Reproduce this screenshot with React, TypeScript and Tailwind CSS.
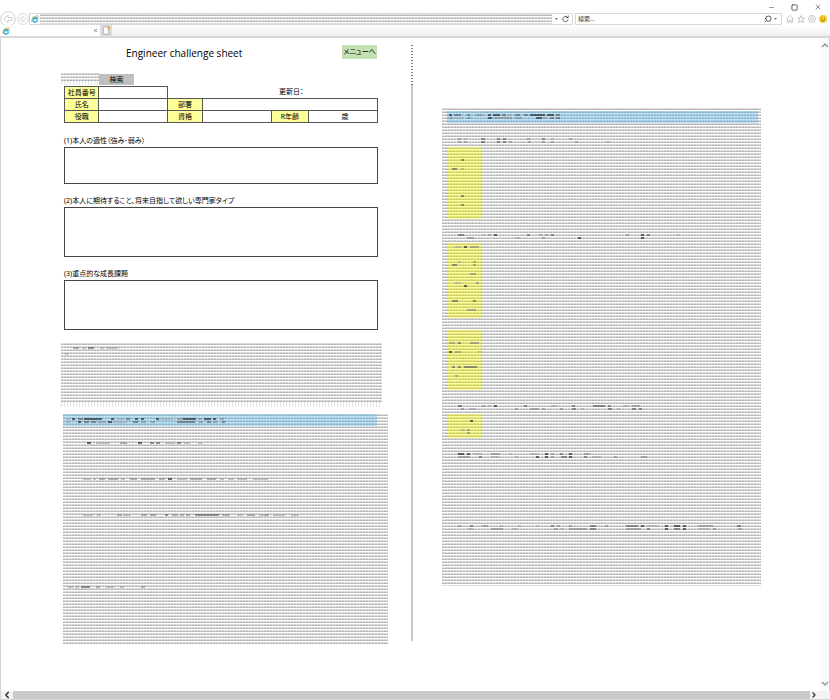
import type { ReactNode } from 'react';
import { ChevronLeft, ChevronRight, Minus, Search, Square, X } from 'lucide-react';

type Mark = [x: number, y: number, width: number, shade?: number];

const noteMarks: Mark[] = [
  [12, 4, 6, 2], [21, 4, 4, 1], [27, 4, 6, 3], [39, 4, 4, 1], [45, 4, 12, 1], [4, 10, 3, 1],
];

const leftHeadMarks: Mark[] = [
  [3, 4, 4, 1], [9, 4, 3, 4], [15, 4, 5, 3], [21, 4, 18, 4], [48, 4, 3, 4], [54, 4, 7, 1],
  [63, 4, 4, 3], [72, 4, 3, 4], [78, 4, 3, 4], [93, 4, 3, 4], [98, 4, 12, 1], [114, 4, 6, 2],
  [120, 4, 13, 4], [135, 4, 4, 2], [141, 4, 7, 4], [150, 4, 3, 4], [157, 4, 4, 2],
  [3, 7, 4, 1], [15, 7, 3, 4], [21, 7, 5, 3], [28, 7, 5, 3], [35, 7, 8, 2], [45, 7, 4, 4],
  [50, 7, 14, 1], [70, 7, 5, 3], [78, 7, 5, 2], [88, 7, 4, 2], [114, 7, 18, 3], [136, 7, 4, 2],
  [144, 7, 4, 3], [150, 7, 4, 2], [159, 7, 3, 3],
];

const leftBodyMarks: Mark[] = [
  [24, 28, 4, 4], [33, 28, 14, 1], [57, 28, 7, 2], [75, 28, 4, 4], [87, 28, 4, 3], [93, 28, 4, 3],
  [102, 28, 10, 1], [114, 28, 4, 3], [121, 28, 6, 1], [135, 28, 4, 1],
  [20, 64, 8, 1], [30, 64, 3, 1], [36, 64, 6, 2], [45, 64, 10, 2], [58, 64, 4, 1], [67, 64, 7, 2],
  [78, 64, 14, 2], [96, 64, 6, 2], [105, 64, 4, 4], [114, 64, 10, 1], [127, 64, 12, 2], [144, 64, 9, 2],
  [157, 64, 4, 1], [165, 64, 6, 1], [174, 64, 10, 1], [190, 64, 15, 1],
  [20, 100, 10, 1], [34, 100, 4, 1], [54, 100, 5, 2], [60, 100, 8, 1], [78, 100, 6, 2],
  [87, 100, 6, 2], [102, 100, 3, 3], [109, 100, 6, 2], [117, 100, 4, 2], [123, 100, 4, 2],
  [132, 100, 24, 3], [159, 100, 8, 2], [174, 100, 6, 1], [184, 100, 8, 2], [196, 100, 8, 1],
  [202, 100, 4, 2], [210, 100, 8, 1], [218, 100, 4, 1], [228, 100, 8, 1],
  [5, 172, 5, 1], [12, 172, 4, 1], [18, 172, 9, 3], [33, 172, 4, 2], [43, 172, 8, 1], [57, 172, 4, 1], [78, 172, 4, 2],
];

const rightMarks: Mark[] = [
  [7, 6, 3, 4], [12, 6, 7, 3], [25, 6, 3, 3], [34, 6, 7, 2], [46, 6, 3, 4], [51, 6, 7, 4], [60, 6, 4, 3],
  [66, 6, 4, 1], [73, 6, 5, 3], [82, 6, 4, 3], [88, 6, 15, 4], [105, 6, 7, 4], [114, 6, 4, 3],
  [7, 9, 4, 2], [13, 9, 8, 1], [25, 9, 4, 2], [46, 9, 4, 4], [52, 9, 18, 2], [73, 9, 7, 2],
  [94, 9, 6, 4], [101, 9, 4, 2], [108, 9, 4, 3], [114, 9, 4, 3],
  [16, 30, 3, 2], [22, 30, 3, 1], [39, 30, 4, 3], [55, 30, 3, 3], [61, 30, 3, 3], [85, 30, 3, 2],
  [100, 30, 3, 3], [109, 30, 3, 1], [127, 30, 3, 2], [16, 33, 3, 2], [22, 33, 3, 2], [39, 33, 4, 3],
  [55, 33, 3, 3], [61, 33, 3, 3], [67, 33, 3, 2], [86, 33, 3, 2], [100, 33, 3, 2], [109, 33, 3, 2], [133, 33, 3, 2], [164, 33, 4, 1],
  [19, 51, 3, 3], [10, 60, 5, 3], [19, 60, 3, 1], [19, 87, 3, 3], [19, 96, 3, 3],
  [16, 126, 6, 3], [40, 126, 3, 1], [46, 126, 3, 2], [52, 126, 3, 4], [85, 126, 3, 3], [97, 126, 3, 2],
  [103, 126, 3, 2], [109, 126, 3, 3], [184, 126, 3, 2], [199, 126, 3, 4], [205, 126, 3, 3], [235, 126, 3, 1],
  [25, 129, 7, 2], [73, 129, 5, 1], [100, 129, 3, 2], [136, 129, 3, 4], [199, 129, 3, 4],
  [13, 138, 6, 1], [22, 138, 3, 4], [28, 138, 9, 2], [16, 153, 3, 1], [31, 153, 3, 2],
  [10, 156, 5, 3], [31, 156, 3, 2], [28, 165, 6, 2], [13, 174, 6, 1], [34, 174, 3, 2],
  [22, 177, 3, 4], [10, 192, 6, 3], [31, 192, 3, 3], [25, 201, 9, 2],
  [7, 234, 6, 2], [16, 234, 3, 3], [28, 234, 9, 2], [7, 243, 3, 4], [13, 243, 6, 2], [36, 243, 3, 1],
  [10, 258, 3, 3], [16, 258, 3, 3], [22, 258, 13, 3], [13, 267, 3, 2],
  [16, 297, 4, 3], [40, 297, 3, 2], [46, 297, 3, 1], [52, 297, 3, 4], [82, 297, 3, 3], [109, 297, 6, 1],
  [130, 297, 3, 3], [151, 297, 12, 3], [166, 297, 3, 3], [181, 297, 6, 1], [190, 297, 8, 2],
  [19, 300, 3, 2], [27, 300, 7, 1], [73, 300, 3, 2], [88, 300, 9, 2], [100, 300, 3, 2],
  [118, 300, 3, 2], [130, 300, 4, 3], [139, 300, 3, 1], [166, 300, 4, 3], [175, 300, 3, 1], [190, 300, 4, 3], [197, 300, 3, 3],
  [28, 312, 3, 4], [19, 321, 4, 1], [25, 321, 3, 2], [25, 324, 3, 2],
  [16, 345, 6, 4], [25, 345, 3, 4], [31, 345, 9, 1], [49, 345, 9, 2], [67, 345, 3, 1], [88, 345, 9, 1],
  [103, 345, 3, 4], [109, 345, 3, 2], [118, 345, 3, 3], [127, 345, 3, 4], [142, 345, 6, 2],
  [16, 348, 12, 2], [37, 348, 3, 3], [49, 348, 8, 1], [73, 348, 3, 1], [94, 348, 3, 4], [103, 348, 3, 4],
  [109, 348, 3, 2], [119, 348, 6, 3], [127, 348, 3, 4], [142, 348, 3, 3], [150, 348, 9, 1], [172, 348, 3, 2], [199, 348, 6, 2],
  [16, 417, 3, 2], [28, 417, 3, 3], [40, 417, 6, 2], [58, 417, 3, 1], [76, 417, 3, 1], [94, 417, 3, 1],
  [109, 417, 3, 3], [115, 417, 3, 2], [127, 417, 3, 2], [148, 417, 6, 3], [163, 417, 3, 2],
  [184, 417, 12, 3], [199, 417, 3, 4], [205, 417, 12, 1], [223, 417, 3, 4], [232, 417, 6, 4],
  [241, 417, 3, 4], [256, 417, 15, 2], [295, 417, 4, 3],
  [26, 420, 5, 1], [49, 420, 12, 2], [70, 420, 6, 1], [112, 420, 4, 2], [118, 420, 4, 1], [127, 420, 18, 2],
  [148, 420, 6, 3], [184, 420, 15, 2], [205, 420, 3, 3], [223, 420, 3, 4], [232, 420, 6, 3], [241, 420, 3, 4],
  [256, 420, 12, 1], [271, 420, 3, 2], [296, 420, 4, 2],
];

const shades = ['#bbbbbb', '#a4a4a4', '#8a8a8a', '#606060', '#202020'];

function Marks({ items }: { items: Mark[] }) {
  return (
    <svg className="absolute inset-0 h-full w-full" aria-hidden="true">
      {items.map(([x, y, width, shade = 1], i) => (
        <rect key={i} x={x} y={y} width={width} height={2} fill={shades[shade]} fillOpacity={0.65} />
      ))}
    </svg>
  );
}

const STRIPES = 'bg-[repeating-linear-gradient(to_right,transparent_0px,transparent_2px,#ffffff50_2px,#ffffff50_3px),repeating-linear-gradient(to_bottom,#d8d8d8_0px,#d8d8d8_1px,#b4b4b4_1px,#b4b4b4_2px,#ffffff_2px,#ffffff_3px)]';
const BLUE = 'bg-[repeating-linear-gradient(to_right,transparent_0px,transparent_2px,#ffffff30_2px,#ffffff30_3px),repeating-linear-gradient(to_bottom,#a3cde5_0px,#a3cde5_1px,#8ab4cb_1px,#8ab4cb_2px,#bbe0f4_2px,#bbe0f4_3px)]';
const YELLOW = 'bg-[repeating-linear-gradient(to_right,transparent_0px,transparent_2px,#ffffff30_2px,#ffffff30_3px),repeating-linear-gradient(to_bottom,#e6e678_0px,#e6e678_1px,#cccc60_1px,#cccc60_2px,#ffff98_2px,#ffff98_3px)]';
const TICKS = 'bg-[repeating-linear-gradient(to_right,#e4e4e4_0px,#e4e4e4_1px,#ffffff_1px,#ffffff_3px)]';

function IeLogo() {
  return (
    <svg viewBox="0 0 16 16" className="size-2 shrink-0" aria-hidden="true">
      <path d="M13 10.5A5 5 0 1 1 13 7.5H5" fill="none" stroke="#35aee8" strokeWidth="3" />
      <path d="M1 14C-1 10 9 0 14 1.5c2 1 .5 3.5-.5 5" fill="none" stroke="#f3c13a" strokeWidth="1.8" />
    </svg>
  );
}

function NavArrow({ label, large, back }: { label: string; large?: boolean; back?: boolean }) {
  return (
    <button aria-label={label} className="shrink-0 text-[#d0d0d0]">
      <svg viewBox="0 0 16 16" className={large ? 'size-4' : 'size-3'} fill="none" stroke="currentColor">
        <circle cx="8" cy="8" r="7.3" />
        {back
          ? <path d="M8 4 4 8l4 4V9.5h4v-3H8z" />
          : <path d="m8 4 4 4-4 4V9.5H4v-3h4z" />}
      </svg>
    </button>
  );
}

function BrowserChrome() {
  return (
    <header className="shrink-0 text-[#555]">
      <div className="flex h-3 items-center justify-end gap-4 pt-0.5 pr-2">
        <button aria-label="最小化"><Minus size={7} /></button>
        <button aria-label="最大化">
          <Square size={7} strokeWidth={3} />
        </button>
        <button aria-label="閉じる"><X size={8} /></button>
      </div>
      <div className="flex h-[13px] items-center">
        <div className="flex w-[29px] items-center gap-px">
          <NavArrow label="戻る" large back />
          <NavArrow label="進む" />
        </div>
        <div className="flex h-3 flex-1 items-center border border-[#d8d8d8] bg-white">
          <div className="flex w-[10px] justify-center"><IeLogo /></div>
          <div className={`h-[10px] flex-1 ${STRIPES}`} />
          <div className="flex w-5 items-center justify-center gap-1 text-[#444]">
            <svg viewBox="0 0 4 2" className="h-0.5 w-[3px]" aria-hidden="true"><path d="M0 0h4L2 2z" fill="currentColor" /></svg>
            <button aria-label="更新">
              <svg viewBox="0 0 16 16" className="size-[7px]" fill="none" stroke="currentColor" strokeWidth="2">
                <path d="M13 6A6 6 0 1 0 14 10M14 1v5H9" />
              </svg>
            </button>
          </div>
        </div>
        <div className="ml-0.5 flex h-3 w-[207px] items-center border border-[#d8d8d8] bg-white pr-1">
          <input
            aria-label="検索"
            placeholder="検索..."
            className="h-2 min-w-0 flex-1 pl-0.5 text-[6px] leading-2 text-[#333] outline-none placeholder:text-[#333]"
          />
          <button aria-label="検索する" className="mr-0.5"><Search size={8} strokeWidth={3} className="-scale-x-100" /></button>
          <svg viewBox="0 0 4 2" className="h-0.5 w-[3px]" aria-hidden="true"><path d="M0 0h4L2 2z" fill="currentColor" /></svg>
        </div>
        <div className="flex items-center gap-[3px] pr-[3px] pl-1 text-[#b5b5b5]">
          <button aria-label="ホーム">
            <svg viewBox="0 0 16 16" className="size-2" fill="none" stroke="currentColor" strokeWidth="1.5"><path d="M1 8 8 1l7 7M3 7v8h3v-5h4v5h3V7" /></svg>
          </button>
          <button aria-label="お気に入り">
            <svg viewBox="0 0 16 16" className="size-2" fill="none" stroke="currentColor" strokeWidth="1.5"><path d="m8 1 2 5h5l-4 4 2 5-5-3-5 3 2-5-4-4h5z" /></svg>
          </button>
          <button aria-label="ツール">
            <svg viewBox="0 0 16 16" className="size-2" fill="none" stroke="currentColor" strokeWidth="1.5"><circle cx="8" cy="8" r="7" /><circle cx="8" cy="8" r="3" /></svg>
          </button>
          <button aria-label="フィードバック">
            <svg viewBox="0 0 16 16" className="size-2"><circle cx="8" cy="8" r="8" fill="#f5cc2b" /><circle cx="5" cy="6" r="1" fill="#775f10" /><circle cx="11" cy="6" r="1" fill="#775f10" /><path d="M4 10q4 4 8 0" fill="none" stroke="#775f10" strokeWidth="1.5" /></svg>
          </button>
        </div>
      </div>
      <div className="flex h-[13px] border-b-2 border-[#d9d9d9] bg-linear-to-b from-white to-[#efefef]">
        <div className="flex w-[100px] items-center justify-between bg-white px-0.5">
          <IeLogo />
          <button aria-label="タブを閉じる"><X size={5} strokeWidth={3} /></button>
        </div>
        <button aria-label="新しいタブ" className="flex w-3 items-center justify-center bg-[#dcdcdc]">
          <svg viewBox="0 0 8 10" className="h-[9px] w-2"><path d="M1 1h6v8H1z" fill="#fff" stroke="#aaa" /><circle cx="7" cy="2" r="1.5" fill="#f7a823" /></svg>
        </button>
      </div>
    </header>
  );
}

function Label({ children }: { children: ReactNode }) {
  return <th className="border border-[#555] bg-[#ffff99] p-0 text-center font-normal">{children}</th>;
}

function ProfileTable() {
  return (
    <table className="w-full table-fixed border-collapse text-[7px] leading-2 text-black">
      <colgroup>
        <col className="w-[11%]" />
        <col className="w-[22%]" />
        <col className="w-[11%]" />
        <col className="w-[22%]" />
        <col className="w-[12%]" />
        <col className="w-[22%]" />
      </colgroup>
      <tbody>
        <tr className="h-3">
          <Label>社員番号</Label>
          <td className="border border-[#555] p-0" />
          <td colSpan={2} className="p-0" />
          <td colSpan={2} className="p-0 pl-2">更新日：</td>
        </tr>
        <tr className="h-3">
          <Label>氏名</Label>
          <td className="border border-[#555] p-0" />
          <Label>部署</Label>
          <td colSpan={3} className="border border-[#555] p-0" />
        </tr>
        <tr className="h-3">
          <Label>役職</Label>
          <td className="border border-[#555] p-0" />
          <Label>資格</Label>
          <td className="border border-[#555] p-0" />
          <Label>R年齢</Label>
          <td className="border border-[#555] p-0 pl-1 text-center">歳</td>
        </tr>
      </tbody>
    </table>
  );
}

function Question({ id, title, tall }: { id: string; title: string; tall?: boolean }) {
  return (
    <div className="flex flex-col">
      <label htmlFor={id} className="h-3 text-[7px] leading-3 text-black">{title}</label>
      <textarea id={id} className={`w-full resize-none border border-[#444] bg-white outline-none ${tall ? 'h-[50px]' : 'h-[37px]'}`} />
    </div>
  );
}

function SheetForm() {
  return (
    <section className="flex min-w-0 flex-col pt-[7px] pl-[60px]">
      <div className="flex items-start pr-[34px]">
        <h1 className="flex-1 pl-[65px] font-['Open_Sans',sans-serif] text-[10px] leading-4 text-black">Engineer challenge sheet</h1>
        <button className="h-[14px] w-[35px] bg-[#c5e0b3] text-[7px] leading-3 text-black">メニューへ</button>
      </div>
      <div className="mt-3 flex h-[13px] items-start">
        <div className="flex w-[38px] flex-col">
          <div className={`h-2 ${STRIPES}`} />
          <div className={`h-1 ${TICKS}`} />
        </div>
        <button className="mt-px h-[11px] w-[35px] bg-[#bfbfbf] text-[7px] leading-3 text-black">検索</button>
      </div>
      <div className="flex flex-col pr-[33px] pl-[3px]">
        <ProfileTable />
        <div className="mt-3 flex flex-col gap-[11px]">
          <Question id="aptitude" title="(1)本人の適性（強み･弱み）" />
          <Question id="expectation" title="(2)本人に期待すること、将来目指して欲しい専門家タイプ" tall />
          <Question id="growth" title="(3)重点的な成長課題" tall />
        </div>
      </div>
      <div className="mt-[13px] mr-[29px]">
        <div className={`relative h-[59px] ${STRIPES}`}><Marks items={noteMarks} /></div>
        <div className={`h-[5px] ${TICKS}`} />
      </div>
      <div className={`relative mt-[7px] mr-[23px] ml-0.5 h-[230px] ${STRIPES}`}>
        <div className={`mr-[11px] h-3 ${BLUE}`} />
        <Marks items={[...leftHeadMarks, ...leftBodyMarks]} />
      </div>
    </section>
  );
}

function SheetDetail() {
  return (
    <section className="min-w-0 pt-[70px] pr-[60px] pl-[29px]">
      <div className={`relative flex h-[478px] flex-col pl-[5px] ${STRIPES}`}>
        <div className={`mt-[3px] mr-[3px] h-3 shrink-0 ${BLUE}`} />
        <div className={`mt-6 h-[72px] w-[35px] shrink-0 ${YELLOW}`} />
        <div className={`mt-6 h-[75px] w-[35px] shrink-0 ${YELLOW}`} />
        <div className={`mt-3 h-[60px] w-[35px] shrink-0 ${YELLOW}`} />
        <div className={`mt-6 h-6 w-[35px] shrink-0 ${YELLOW}`} />
        <Marks items={rightMarks} />
      </div>
    </section>
  );
}

export default function App() {
  return (
    <div className="flex min-h-screen flex-col bg-white font-['Noto_Sans','Noto_Sans_CJK_JP',sans-serif] [font-feature-settings:'palt']">
      <BrowserChrome />
      <div className="flex flex-1 border-l border-[#d4d4d4]">
        <main className="grid min-w-0 flex-1 grid-cols-[410fr_2px_408fr]">
          <SheetForm />
          <div className="mt-[7px] mb-[50px] flex flex-col">
            <div className="h-10 bg-[repeating-linear-gradient(to_bottom,#777_0px,#777_1px,#fff_1px,#fff_3px)]" />
            <div className="flex-1 bg-[#c8c8c8]" />
          </div>
          <SheetDetail />
        </main>
        <div className="flex w-[9px] flex-col items-center justify-between border-r border-[#d0d0d0] bg-[#fafafa] py-1 text-[#999]">
          <button aria-label="上へスクロール">
            <svg viewBox="0 0 8 6" className="h-1.5 w-2" fill="none" stroke="currentColor" strokeWidth="1.5"><path d="m1 5 3-3 3 3" /></svg>
          </button>
          <button aria-label="下へスクロール">
            <svg viewBox="0 0 8 6" className="h-1.5 w-2" fill="none" stroke="currentColor" strokeWidth="1.5"><path d="m1 1 3 3 3-3" /></svg>
          </button>
        </div>
      </div>
      <div className="flex h-[9px] items-center border-b border-l border-[#d4d4d4] bg-[#f3f3f3] pr-3 text-[#333]">
        <button aria-label="左へスクロール" className="flex w-3 justify-center"><ChevronLeft size={10} strokeWidth={4} /></button>
        <div className="h-2 flex-1 bg-[#cacaca]" />
        <button aria-label="右へスクロール" className="flex w-2 justify-center"><ChevronRight size={10} strokeWidth={4} /></button>
      </div>
    </div>
  );
}
